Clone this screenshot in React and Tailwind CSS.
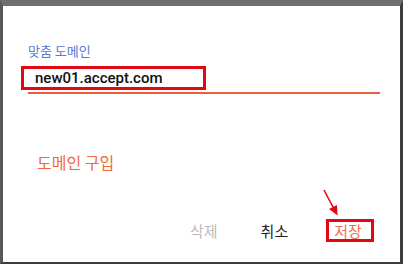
export default function App() {
  return (
    <div className="relative w-[403px] h-[264px] overflow-hidden bg-white border-t-[6px] border-t-[#6f6f6f] border-l-[3px] border-l-[#585858] border-r-[3px] border-r-[#3c3c3c] border-b-[2px] border-b-[#3c3c3c] font-['Noto_Sans_CJK_KR','Noto_Sans',sans-serif]">
      <div className="pl-[25px]">
        {/* label */}
        <div className="pt-[37px] text-[13px] leading-[16px] text-[#5679d6]">맞춤 도메인</div>

        {/* field value, marked with red box */}
        <div className="mt-[7px] -ml-[7px] w-[185px] h-[24px] border-[3px] border-[#e30613] flex items-center pl-[11px]">
          <span className="font-['Roboto',sans-serif] font-medium text-[15px] leading-[18px] text-[#111]">new01.accept.com</span>
        </div>
        <div className="mt-[2px] w-[352px] h-[2px] bg-[#e8613a]"></div>

        {/* buy domain */}
        <div className="mt-[58px] ml-[9px] text-[16px] leading-[20px] text-[#f0673b]">도메인 구입</div>

        {/* actions */}
        <div className="mt-[47px] flex items-center text-[15px] leading-[20px]">
          <span className="ml-[162px] text-[#b9b9b9]">삭제</span>
          <span className="ml-[43px] text-[#222]">취소</span>
          <span className="ml-[38px] h-[23px] flex items-center border-[3px] border-[#e30613] pl-[5px] pr-[9px] text-[15px] text-[#f07352]">저장</span>
        </div>
      </div>

      {/* annotation arrow */}
      <svg className="absolute left-[312px] top-[179px]" width="30" height="36" viewBox="0 0 30 36">
        <line x1="9" y1="5" x2="19" y2="24" stroke="#e30613" strokeWidth="1.6" />
        <polygon points="22.5,30.5 14,24 22,20" fill="#e30613" />
      </svg>
    </div>
  )
}
